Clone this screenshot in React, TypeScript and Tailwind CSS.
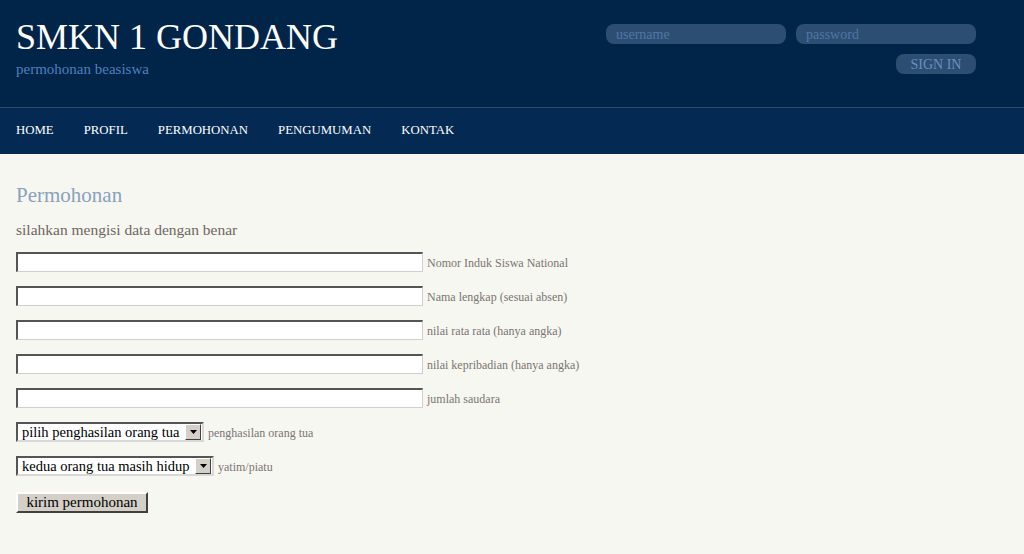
import React from 'react';

const serif = { fontFamily: '"Liberation Serif", "DejaVu Serif", serif' };

const fields = [
  'Nomor Induk Siswa National',
  'Nama lengkap (sesuai absen)',
  'nilai rata rata (hanya angka)',
  'nilai kepribadian (hanya angka)',
  'jumlah saudara',
];

const menu = ['HOME', 'PROFIL', 'PERMOHONAN', 'PENGUMUMAN', 'KONTAK'];

function FakeSelect({ text, width }: { text: string; width: string }) {
  return (
    <div
      className={`flex h-[20px] items-center justify-between border-2 border-t-[#555] border-l-[#555] border-b-[#d8d8d8] border-r-[#d8d8d8] bg-white ${width}`}
    >
      <span className="whitespace-nowrap pl-[4px] text-[14.5px] leading-none text-black">{text}</span>
      <span className="mr-[1px] flex h-[16px] w-[16px] shrink-0 items-center justify-center border border-t-[#fff] border-l-[#fff] border-b-[#404040] border-r-[#404040] bg-[#d4d0c8]">
        <svg width="7" height="4" viewBox="0 0 7 4">
          <path d="M0 0h7L3.5 4z" fill="#000" />
        </svg>
      </span>
    </div>
  );
}

export default function App() {
  return (
    <div className="min-h-[554px] bg-[#f7f7f2]" style={serif}>
      <header className="flex h-[107px] justify-between bg-[#012549] px-4">
        <div className="pt-[16px]">
          <h1 className="text-[36px] leading-[42px] text-white">SMKN 1 GONDANG</h1>
          <p className="mt-[2px] text-[15px] leading-[18px] text-[#4f7fbd]">permohonan beasiswa</p>
        </div>
        <div className="mr-[32px] flex flex-col items-end gap-[10px] pt-[24px]">
          <div className="flex gap-[10px]">
            <div className="flex h-[20px] w-[180px] items-center rounded-[8px] bg-[#2d4e73] px-[10px] text-[14px] text-[#4f77a6]">
              username
            </div>
            <div className="flex h-[20px] w-[180px] items-center rounded-[8px] bg-[#2d4e73] px-[10px] text-[14px] text-[#4f77a6]">
              password
            </div>
          </div>
          <div className="flex h-[20px] w-[80px] items-center justify-center rounded-[8px] bg-[#2d4e73] text-[14px] text-[#6890c2]">
            SIGN IN
          </div>
        </div>
      </header>
      <nav className="flex h-[47px] items-center gap-[30px] border-t border-[#2a4a70] bg-[#042a53] px-4 text-[12.8px] text-white">
        {menu.map((m) => (
          <span key={m}>{m}</span>
        ))}
      </nav>
      <main className="px-4 pt-[28px]">
        <h2 className="text-[21px] leading-[26px] text-[#8aa1bb]">Permohonan</h2>
        <p className="mt-[13px] text-[15.5px] leading-[18px] text-[#6e6660]">silahkan mengisi data dengan benar</p>
        <div className="mt-[13px] flex flex-col gap-[14px]">
          {fields.map((f) => (
            <div key={f} className="flex items-center gap-[4px]">
              <div className="h-[20px] w-[407px] border-t-2 border-l-2 border-b border-r border-t-[#555] border-l-[#555] border-b-[#cfcfcf] border-r-[#cfcfcf] bg-white" />
              <span className="pt-[2px] text-[12px] text-[#7a7570]">{f}</span>
            </div>
          ))}
          <div className="flex items-center gap-[4px]">
            <FakeSelect text="pilih penghasilan orang tua" width="w-[188px]" />
            <span className="pt-[2px] text-[12px] text-[#7a7570]">penghasilan orang tua</span>
          </div>
          <div className="flex items-center gap-[4px]">
            <FakeSelect text="kedua orang tua masih hidup" width="w-[198px]" />
            <span className="pt-[2px] text-[12px] text-[#7a7570]">yatim/piatu</span>
          </div>
          <div>
            <button className="h-[21px] w-[132px] border-2 border-t-[#fff] border-l-[#fff] border-b-[#404040] border-r-[#404040] bg-[#d4d0c8] text-[15px] leading-none text-black">
              kirim permohonan
            </button>
          </div>
        </div>
      </main>
    </div>
  );
}
